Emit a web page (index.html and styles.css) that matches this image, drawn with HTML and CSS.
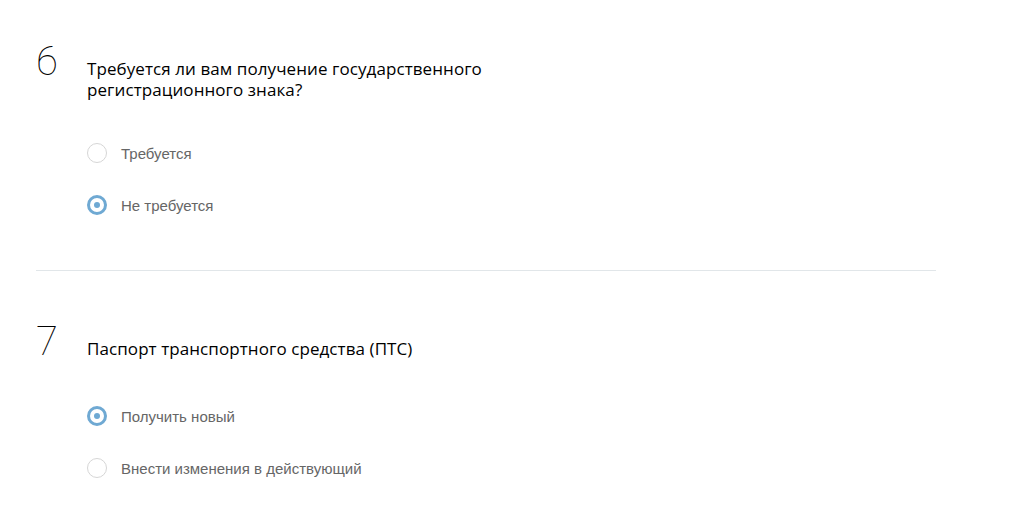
FILE: index.html
```html
<!DOCTYPE html>
<html lang="ru">
<head>
<meta charset="utf-8">
<title>Вопросы</title>
<link rel="stylesheet" href="styles.css">
</head>
<body>
<main class="page">
  <section class="question question-first">
    <div class="q-head">
      <div class="q-num">6</div>
      <h2 class="q-title">Требуется ли вам получение государственного<br>регистрационного знака?</h2>
    </div>
    <ul class="options">
      <li class="option"><span class="radio"></span><span class="label">Требуется</span></li>
      <li class="option"><span class="radio radio-checked"></span><span class="label">Не требуется</span></li>
    </ul>
  </section>
  <hr class="divider">
  <section class="question">
    <div class="q-head">
      <div class="q-num">7</div>
      <h2 class="q-title">Паспорт транспортного средства (ПТС)</h2>
    </div>
    <ul class="options">
      <li class="option"><span class="radio radio-checked"></span><span class="label">Получить новый</span></li>
      <li class="option"><span class="radio"></span><span class="label">Внести изменения в действующий</span></li>
    </ul>
  </section>
</main>
</body>
</html>
```

FILE: styles.css
```css
html, body {
  margin: 0;
  padding: 0;
  background: #ffffff;
}

.page {
  width: 900px;
  padding: 0 36px;
  font-family: "Liberation Sans", Arial, sans-serif;
}

.question {
  padding-top: 50px;
}

.question-first {
  padding-top: 41px;
}

.q-head {
  display: flex;
  align-items: baseline;
}

.q-num {
  width: 51px;
  flex: none;
  font-family: Roboto, "Inter", sans-serif;
  font-weight: 100;
  font-size: 40px;
  line-height: 42px;
  color: #000;
}

.q-title {
  margin: 0;
  font-family: "Open Sans", "Noto Sans", sans-serif;
  font-weight: 400;
  font-size: 17px;
  line-height: 21px;
  letter-spacing: 0.08px;
  color: #000;
}

.options {
  list-style: none;
  margin: 43px 0 0 51px;
  padding: 0;
  display: flex;
  flex-direction: column;
  gap: 32px;
}

.option {
  display: flex;
  align-items: center;
  gap: 14px;
  height: 20px;
}

.radio {
  box-sizing: border-box;
  width: 20px;
  height: 20px;
  border-radius: 50%;
  border: 1px solid #d6d6d6;
  flex: none;
  display: flex;
  align-items: center;
  justify-content: center;
}

.radio-checked {
  border: 3px solid #6fa9d3;
}

.radio-checked::after {
  content: "";
  width: 6px;
  height: 6px;
  border-radius: 50%;
  background: #6fa9d3;
}

.label {
  font-size: 15px;
  color: #666;
}

.divider {
  border: 0;
  border-top: 1px solid #e1e6e9;
  margin: 55px 0 0;
}
```
